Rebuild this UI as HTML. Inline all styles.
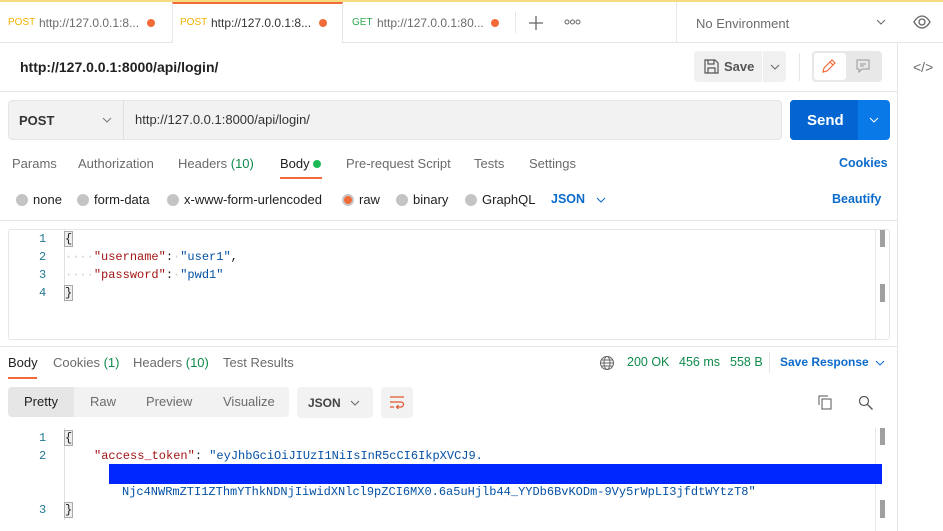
<!DOCTYPE html>
<html><head><meta charset="utf-8"><style>
*{box-sizing:border-box;margin:0;padding:0}
body{width:943px;height:531px;overflow:hidden;background:#fff;font-family:"Liberation Sans",sans-serif;font-size:13px;color:#212121;position:relative}
.a{position:absolute;white-space:nowrap}
.mono{font-family:"Liberation Mono",monospace;font-size:12px}
.g{color:#6b6b6b}
.blue{color:#0b6bcb;font-weight:bold;font-size:12.5px}
.grn{color:#0f8a4a}
.radio{position:absolute;width:12px;height:12px;border-radius:50%;background:#c4c4c4}
.ln{color:#237893;font-family:"Liberation Mono",monospace;font-size:12px;position:absolute}
.k{color:#a31515}.s{color:#0451a5}
.tab{font-size:12px}
</style></head><body>
<div class="a" style="left:0;top:0;width:943px;height:2px;background:#f7dc7f"></div>
<!-- tab bar -->
<div class="a" style="left:0;top:42px;width:943px;height:1px;background:#e6e6e6"></div>
<div class="a" style="left:172px;top:2px;width:171px;height:41px;background:#fff;border-left:1px solid #e6e6e6;border-right:1px solid #e6e6e6;border-top:2px solid #f26b3a"></div>
<div class="a" style="left:8px;top:17px;font-size:10px;color:#f3b200">POST</div>
<div class="a g tab" style="left:39px;top:16px">http://127.0.0.1:8...</div>
<div class="a" style="left:147px;top:19px;width:8px;height:8px;border-radius:50%;background:#f26b3a"></div>
<div class="a" style="left:180px;top:17px;font-size:10px;color:#f3b200">POST</div>
<div class="a tab" style="left:211px;top:16px;color:#333">http://127.0.0.1:8...</div>
<div class="a" style="left:319px;top:19px;width:8px;height:8px;border-radius:50%;background:#f26b3a"></div>
<div class="a" style="left:352px;top:17px;font-size:10px;color:#2fa84f">GET</div>
<div class="a g tab" style="left:377px;top:16px">http://127.0.0.1:80...</div>
<div class="a" style="left:491px;top:19px;width:8px;height:8px;border-radius:50%;background:#f26b3a"></div>
<div class="a" style="left:515px;top:12px;width:1px;height:21px;background:#e6e6e6"></div>
<svg class="a" style="left:529px;top:16px" width="14" height="14"><path d="M7 0v14M0 7h14" stroke="#666" stroke-width="1.3"/></svg>
<svg class="a" style="left:564px;top:19px" width="17" height="6"><circle cx="3" cy="3" r="2" stroke="#666" fill="none"/><circle cx="8.5" cy="3" r="2" stroke="#666" fill="none"/><circle cx="14" cy="3" r="2" stroke="#666" fill="none"/></svg>
<div class="a" style="left:676px;top:2px;width:1px;height:40px;background:#e6e6e6"></div>
<div class="a g" style="left:696px;top:16px">No Environment</div>
<svg class="a" style="left:875px;top:18px" width="12" height="8"><path d="M2 2l4 4 4-4" stroke="#666" fill="none"/></svg>
<svg class="a" style="left:912px;top:14px" width="20" height="16"><path d="M2 8C5 3 8 2 10 2s5 1 8 6c-3 5-6 6-8 6S5 13 2 8z" stroke="#666" fill="none" stroke-width="1.3"/><circle cx="10" cy="8" r="3" stroke="#666" fill="none" stroke-width="1.3"/></svg>
<!-- right sidebar -->
<div class="a" style="left:897px;top:42px;width:1px;height:489px;background:#e6e6e6"></div>
<div class="a g" style="left:913px;top:59px;font-size:14px">&lt;/&gt;</div>
<!-- title row -->
<div class="a" style="left:20px;top:59px;font-size:14px;font-weight:bold">http://127.0.0.1:8000/api/login/</div>
<div class="a" style="left:0;top:91px;width:897px;height:1px;background:#e6e6e6"></div>
<div class="a" style="left:694px;top:51px;width:68px;height:31px;background:#f0f0f0;border-radius:4px 0 0 4px"></div>
<svg class="a" style="left:704px;top:59px" width="15" height="15"><path d="M1 1h10l3 3v10H1z M4 1v4h6V1 M4 14V9h7v5" stroke="#555" fill="none" stroke-width="1.2"/></svg>
<div class="a" style="left:724px;top:59px;font-weight:bold;color:#555">Save</div>
<div class="a" style="left:763px;top:51px;width:23px;height:31px;background:#f0f0f0;border-radius:0 4px 4px 0"></div>
<svg class="a" style="left:769px;top:63px" width="12" height="8"><path d="M2 2l4 4 4-4" stroke="#666" fill="none"/></svg>
<div class="a" style="left:799px;top:53px;width:1px;height:28px;background:#e6e6e6"></div>
<div class="a" style="left:812px;top:51px;width:70px;height:31px;background:#e8e8e8;border-radius:4px"></div>
<div class="a" style="left:814px;top:53px;width:32px;height:27px;background:#fff;border-radius:3px"></div>
<svg class="a" style="left:821px;top:58px" width="16" height="16"><path d="M2 14l1-4 8-8 3 3-8 8z M9 4l3 3" stroke="#f26b3a" fill="none" stroke-width="1.2"/></svg>
<svg class="a" style="left:856px;top:59px" width="14" height="14"><path d="M1 1h12v9H6l-3 3v-3H1z M4 5h6 M4 7h4" stroke="#999" fill="none"/></svg>
<!-- url row -->
<div class="a" style="left:8px;top:100px;width:774px;height:40px;background:#f2f2f2;border:1px solid #e6e6e6;border-radius:4px"></div>
<div class="a" style="left:123px;top:100px;width:1px;height:40px;background:#e0e0e0"></div>
<div class="a" style="left:19px;top:113px;font-weight:bold;font-size:13px;color:#333">POST</div>
<svg class="a" style="left:101px;top:116px" width="12" height="8"><path d="M2 2l4 4 4-4" stroke="#777" fill="none"/></svg>
<div class="a" style="left:135px;top:112px;color:#333">http://127.0.0.1:8000/api/login/</div>
<div class="a" style="left:790px;top:100px;width:100px;height:40px;background:#0a79e8;border-radius:4px"></div>
<div class="a" style="left:790px;top:100px;width:68px;height:40px;background:#0265d2;border-radius:4px 0 0 4px"></div>
<div class="a" style="left:807px;top:112px;color:#fff;font-weight:bold;font-size:15px">Send</div>
<svg class="a" style="left:868px;top:116px" width="12" height="8"><path d="M2 2l4 4 4-4" stroke="#fff" fill="none"/></svg>
<!-- request tabs -->
<div class="a g" style="left:12px;top:156px">Params</div>
<div class="a g" style="left:78px;top:156px">Authorization</div>
<div class="a g" style="left:178px;top:156px">Headers <span class="grn">(10)</span></div>
<div class="a" style="left:280px;top:156px;color:#212121">Body</div>
<div class="a" style="left:313px;top:160px;width:8px;height:8px;border-radius:50%;background:#1db954"></div>
<div class="a" style="left:280px;top:177px;width:42px;height:2px;background:#f26b3a"></div>
<div class="a g" style="left:346px;top:156px">Pre-request Script</div>
<div class="a g" style="left:474px;top:156px">Tests</div>
<div class="a g" style="left:529px;top:156px">Settings</div>
<div class="a blue" style="left:839px;top:156px">Cookies</div>
<!-- radios -->
<div class="radio" style="left:16px;top:194px"></div><div class="a" style="left:33px;top:192px">none</div>
<div class="radio" style="left:77px;top:194px"></div><div class="a" style="left:94px;top:192px">form-data</div>
<div class="radio" style="left:167px;top:194px"></div><div class="a" style="left:184px;top:192px">x-www-form-urlencoded</div>
<div class="radio" style="left:342px;top:194px;background:#f26b3a;border:2px solid #c8c8c8"></div><div class="a" style="left:359px;top:192px">raw</div>
<div class="radio" style="left:396px;top:194px"></div><div class="a" style="left:413px;top:192px">binary</div>
<div class="radio" style="left:465px;top:194px"></div><div class="a" style="left:482px;top:192px">GraphQL</div>
<div class="a blue" style="left:551px;top:192px">JSON</div>
<svg class="a" style="left:595px;top:196px" width="12" height="8"><path d="M2 2l4 4 4-4" stroke="#0b6bcb" fill="none"/></svg>
<div class="a blue" style="left:832px;top:192px">Beautify</div>
<div class="a" style="left:0;top:220px;width:897px;height:1px;background:#e6e6e6"></div>
<!-- editor -->
<div class="a" style="left:8px;top:229px;width:882px;height:111px;border:1px solid #e6e6e6;border-radius:3px"></div>
<div class="a" style="left:875px;top:230px;width:1px;height:109px;background:#e6e6e6"></div>
<div class="a" style="left:880px;top:230px;width:5px;height:17px;background:#a0a0a0"></div>
<div class="a" style="left:880px;top:284px;width:5px;height:18px;background:#a0a0a0"></div>
<div class="a" style="left:64px;top:230px;width:1px;height:72px;background:#e0e0e0"></div>
<div class="ln" style="left:39px;top:232px">1</div>
<div class="ln" style="left:39px;top:250px">2</div>
<div class="ln" style="left:39px;top:268px">3</div>
<div class="ln" style="left:39px;top:286px">4</div>
<div class="a mono" style="left:65px;top:232px;background:#eee;outline:1px solid #aaa">{</div>
<div class="a mono" style="left:65px;top:250px"><span style="color:#ccc">····</span><span class="k">"username"</span>:<span style="color:#ccc">·</span><span class="s">"user1"</span>,</div>
<div class="a mono" style="left:65px;top:268px"><span style="color:#ccc">····</span><span class="k">"password"</span>:<span style="color:#ccc">·</span><span class="s">"pwd1"</span></div>
<div class="a mono" style="left:65px;top:286px;background:#eee;outline:1px solid #aaa">}</div>
<div class="a" style="left:0;top:346px;width:897px;height:1px;background:#e6e6e6"></div>
<!-- response tabs -->
<div class="a" style="left:8px;top:355px">Body</div>
<div class="a" style="left:8px;top:377px;width:29px;height:2px;background:#f26b3a"></div>
<div class="a g" style="left:53px;top:355px">Cookies <span class="grn">(1)</span></div>
<div class="a g" style="left:133px;top:355px">Headers <span class="grn">(10)</span></div>
<div class="a g" style="left:223px;top:355px">Test Results</div>
<svg class="a" style="left:599px;top:355px" width="16" height="16"><circle cx="8" cy="8" r="6.5" stroke="#666" fill="none"/><ellipse cx="8" cy="8" rx="3" ry="6.5" stroke="#666" fill="none"/><path d="M1.5 8h13 M2.5 5h11 M2.5 11h11" stroke="#666"/></svg>
<div class="a grn" style="left:627px;top:355px;font-size:12.5px">200 OK</div>
<div class="a grn" style="left:679px;top:355px;font-size:12.5px">456 ms</div>
<div class="a grn" style="left:730px;top:355px;font-size:12.5px">558 B</div>
<div class="a" style="left:769px;top:352px;width:1px;height:21px;background:#e6e6e6"></div>
<div class="a blue" style="left:780px;top:355px;font-size:12px">Save Response</div>
<svg class="a" style="left:874px;top:359px" width="12" height="8"><path d="M2 2l4 4 4-4" stroke="#0b6bcb" fill="none"/></svg>
<div class="a" style="left:8px;top:387px;width:281px;height:30px;background:#f2f2f2;border-radius:4px"></div>
<div class="a" style="left:8px;top:387px;width:66px;height:30px;background:#e6e6e6;border-radius:4px 0 0 4px"></div>
<div class="a" style="left:24px;top:394px">Pretty</div>
<div class="a g" style="left:90px;top:394px">Raw</div>
<div class="a g" style="left:146px;top:394px">Preview</div>
<div class="a g" style="left:223px;top:394px">Visualize</div>
<div class="a" style="left:297px;top:387px;width:76px;height:31px;background:#f2f2f2;border-radius:4px"></div>
<div class="a" style="left:308px;top:396px;font-weight:bold;font-size:12px;color:#444">JSON</div>
<svg class="a" style="left:349px;top:399px" width="12" height="8"><path d="M2 2l4 4 4-4" stroke="#666" fill="none"/></svg>
<div class="a" style="left:381px;top:387px;width:32px;height:31px;background:#f2f2f2;border-radius:4px"></div>
<svg class="a" style="left:389px;top:395px" width="16" height="14"><path d="M1 2h14 M1 7h11a2.5 2.5 0 0 1 0 5H8 M1 12h4 M9.5 10l-2 2 2 2" stroke="#e0552c" fill="none" stroke-width="1.2"/></svg>
<svg class="a" style="left:818px;top:395px" width="16" height="16"><path d="M1 10V1h9" stroke="#555" fill="none"/><rect x="4" y="4" width="9" height="10" stroke="#555" fill="none"/></svg>
<svg class="a" style="left:858px;top:395px" width="16" height="16"><circle cx="6" cy="6" r="4.5" stroke="#555" fill="none" stroke-width="1.2"/><path d="M9.5 9.5l5 5" stroke="#555" stroke-width="1.3"/></svg>
<!-- response code -->
<div class="a" style="left:875px;top:428px;width:1px;height:103px;background:#e6e6e6"></div>
<div class="a" style="left:880px;top:428px;width:5px;height:17px;background:#a0a0a0"></div>
<div class="a" style="left:880px;top:500px;width:5px;height:18px;background:#a0a0a0"></div>
<div class="a" style="left:64px;top:428px;width:1px;height:92px;background:#e0e0e0"></div>
<div class="ln" style="left:39px;top:431px">1</div>
<div class="ln" style="left:39px;top:449px">2</div>
<div class="ln" style="left:39px;top:503px">3</div>
<div class="a mono" style="left:65px;top:431px;background:#eee;outline:1px solid #aaa">{</div>
<div class="a mono" style="left:94px;top:449px"><span class="k">"access_token"</span>: <span class="s">"eyJhbGciOiJIUzI1NiIsInR5cCI6IkpXVCJ9.</span></div>
<div class="a" style="left:109px;top:464px;width:773px;height:20px;background:#0026ff"></div>
<div class="a mono s" style="left:122px;top:485px">Njc4NWRmZTI1ZThmYThkNDNjIiwidXNlcl9pZCI6MX0.6a5uHjlb44_YYDb6BvKODm-9Vy5rWpLI3jfdtWYtzT8"</div>
<div class="a mono" style="left:65px;top:503px;background:#eee;outline:1px solid #aaa">}</div>
</body></html>
